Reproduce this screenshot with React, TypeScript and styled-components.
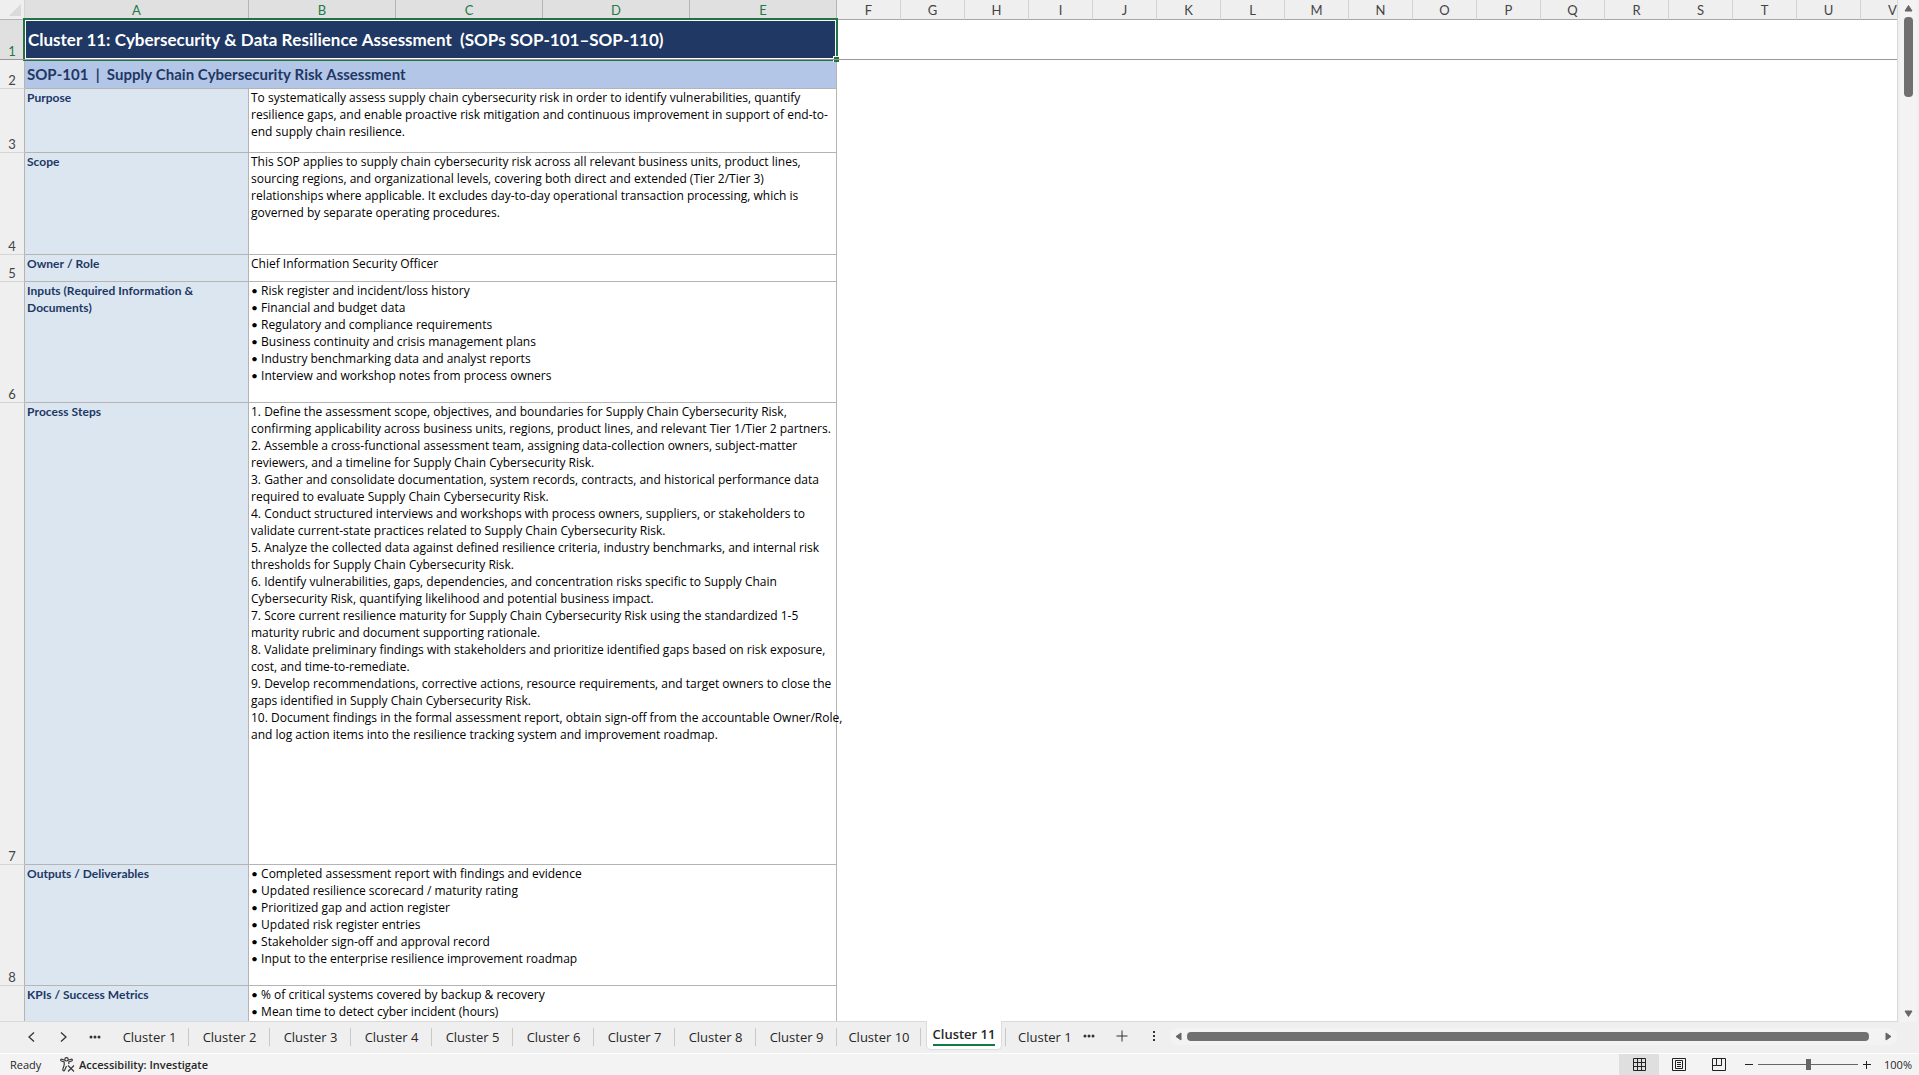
import React, { Fragment } from 'react';
import styled, { createGlobalStyle, css } from 'styled-components';

const sheetFont = "Lato, 'Liberation Sans', sans-serif";
const uiFont = "'Open Sans', 'Noto Sans', sans-serif";

const GlobalStyle = createGlobalStyle`
  * { box-sizing: border-box; }
  body { margin: 0; background: #efefef; font-family: ${uiFont}; color: #262626; }
  button { font: inherit; color: inherit; background: none; border: 0; padding: 0; margin: 0; cursor: default; }
`;

const Window = styled.div`
  display: flex;
  flex-direction: column;
  height: 100vh;
  overflow: hidden;
`;

const Workspace = styled.main`
  flex: 1;
  min-height: 0;
  display: flex;
`;

const SheetPane = styled.div`
  flex: 1;
  min-width: 0;
  overflow: hidden;
  background: #fff;
  border-right: 1px solid #d9d9d9;
  border-bottom: 1px solid #d9d9d9;
`;

const Grid = styled.table`
  table-layout: fixed;
  width: 1925px;
  border-collapse: separate;
  border-spacing: 0;
  font-family: ${sheetFont};
`;

const Col = styled.col<{ $w: number }>`
  width: ${p => p.$w}px;
`;

const Corner = styled.td`
  height: 20px;
  padding: 4px 3px 3px 0;
  background: #efefef;
  border-right: 1px solid #d4d4d4;
  border-bottom: 1px solid #b4b4b4;
  svg { display: block; margin-left: auto; }
`;

const ColumnHead = styled.th<{ $active?: boolean }>`
  height: 20px;
  padding: 2px 0 1px;
  background: ${p => (p.$active ? '#e0e0e0' : '#efefef')};
  color: ${p => (p.$active ? '#1e7a47' : '#444')};
  border-right: 1px solid ${p => (p.$active ? '#b4b4b4' : '#d4d4d4')};
  border-bottom: 1px solid #a6a6a6;
  font-size: 13px;
  line-height: 16px;
  font-weight: 400;
  text-align: center;
`;

const RowHead = styled.th<{ $active?: boolean }>`
  padding: 0;
  background: ${p => (p.$active ? '#e0e0e0' : '#efefef')};
  color: ${p => (p.$active ? '#1e7a47' : '#444')};
  border-right: 1px solid #b4b4b4;
  border-bottom: 1px solid ${p => (p.$active ? '#999' : '#d4d4d4')};
  font-size: 13px;
  line-height: 16px;
  font-weight: 400;
  text-align: center;
  vertical-align: bottom;
`;

const Row = styled.tr<{ $h: number }>`
  height: ${p => p.$h}px;
`;

const cell = css`
  padding: 0 2px;
  border-right: 1px solid #b4b4b4;
  border-bottom: 1px solid #b4b4b4;
  vertical-align: top;
  text-align: left;
  line-height: 17px;
  white-space: pre;
`;

const TitleCell = styled.td`
  position: relative;
  padding: 0 3px;
  background: #203864;
  color: #fff;
  font-size: 17px;
  line-height: 24px;
  font-weight: 700;
  font-kerning: none;
  white-space: pre;
`;

const Selection = styled.div`
  position: absolute;
  inset: -2px -1px -1px -2px;
  border: 2px solid #217346;
  box-shadow: inset 0 0 0 1px #fff;
`;

const FillHandle = styled.div`
  position: absolute;
  right: -2px;
  bottom: -2px;
  width: 6px;
  height: 6px;
  background: #217346;
  border: solid #fff;
  border-width: 1px 0 0 1px;
`;

const FreezeLine = styled.div`
  position: absolute;
  left: -2px;
  right: -2px;
  bottom: 0;
  height: 1px;
  background: #999;
`;

const SectionCell = styled.td`
  ${cell}
  vertical-align: middle;
  background: #b4c6e7;
  color: #203864;
  font-size: 15px;
  font-weight: 700;
  font-kerning: none;
`;

const LabelCell = styled.th`
  ${cell}
  background: #dce6f1;
  color: #203864;
  font-size: 12px;
  font-weight: 700;
  font-kerning: none;
  font-variant-ligatures: none;
`;

const TextCell = styled.td`
  ${cell}
  color: #000;
  font-family: ${uiFont};
  font-size: 12px;
`;

const Bullet = styled.span`
  font-family: ${sheetFont};
  line-height: 1;
`;

const EmptyCell = styled.td<{ $frozen?: boolean }>`
  border-bottom: ${p => (p.$frozen ? '1px solid #999' : '0')};
`;

const VScroll = styled.div`
  width: 21px;
  display: flex;
  flex-direction: column;
  align-items: center;
  padding: 4px 0;
  background: #f3f3f3;
  border-left: 2px solid #efefef;
  border-right: 2px solid #efefef;
`;

const VTrack = styled.div`
  flex: 1;
  padding-top: 5px;
`;

const VThumb = styled.div`
  width: 9px;
  height: 80px;
  border-radius: 4px;
  background: #707070;
`;

const ArrowButton = styled.button`
  display: block;
  svg { display: block; }
`;

const TabBar = styled.nav`
  height: 31px;
  display: flex;
  align-items: flex-start;
  background: #efefef;
  font-size: 13px;
`;

const NavButtons = styled.div`
  display: flex;
  align-items: center;
  height: 30px;
  width: 110px;
  padding-left: 15px;
`;

const NavButton = styled.button<{ $w?: number }>`
  width: ${p => p.$w ?? 32}px;
  height: 28px;
  display: flex;
  align-items: center;
  justify-content: center;
  svg { display: block; }
`;

const Tab = styled.button<{ $w: number }>`
  width: ${p => p.$w}px;
  height: 30px;
  display: flex;
  align-items: center;
  justify-content: center;
  position: relative;
  white-space: nowrap;
  &::after {
    content: '';
    position: absolute;
    right: 0;
    top: 6px;
    height: 18px;
    width: 1px;
    background: #c8c8c8;
  }
`;

const ActiveTab = styled.button`
  width: 76px;
  height: 29px;
  margin: -1px 0 0 5px;
  padding-bottom: 1px;
  background: #fff;
  border: 1px solid #dcdcdc;
  border-top: 0;
  border-radius: 0 0 5px 5px;
  font-weight: 600;
  line-height: 20px;
  white-space: nowrap;
  span {
    display: inline-block;
    border-bottom: 2px solid #107c41;
  }
`;

const TabDivider = styled.span`
  width: 1px;
  height: 18px;
  margin: 6px 0 0 3px;
  background: #c8c8c8;
`;

const CutTab = styled.button`
  height: 30px;
  padding-left: 12px;
  white-space: nowrap;
`;

const HScroll = styled.div`
  flex: 1;
  min-width: 0;
  height: 17px;
  margin: 6px 22px 0 0;
  padding: 0 5px;
  display: flex;
  align-items: center;
  border-radius: 8px;
  background: #f3f3f3;
`;

const HThumb = styled.div`
  flex: 1;
  height: 9px;
  margin: 0 16px 0 5px;
  border-radius: 4px;
  background: #707070;
`;

const StatusBar = styled.footer`
  height: 22px;
  display: flex;
  align-items: stretch;
  background: #f3f3f3;
  border-top: 1px solid #fff;
  font-size: 11px;
`;

const Ready = styled.span`
  display: flex;
  align-items: center;
  width: 60px;
  padding-left: 10px;
`;

const Access = styled.button`
  display: flex;
  align-items: center;
  gap: 4px;
  font-weight: 600;
`;

const ViewGroup = styled.div`
  display: flex;
  margin-left: auto;
`;

const ViewButton = styled.button<{ $active?: boolean }>`
  width: 40px;
  display: flex;
  align-items: center;
  justify-content: center;
  background: ${p => (p.$active ? '#dfdfdf' : 'transparent')};
`;

const Zoom = styled.div`
  display: flex;
  align-items: center;
  width: 180px;
  padding-left: 3px;
`;

const ZoomButton = styled.button`
  flex: none;
  width: 14px;
  height: 20px;
  display: flex;
  align-items: center;
  justify-content: center;
`;

const Slider = styled.input`
  appearance: none;
  flex: none;
  width: 100px;
  height: 12px;
  margin: 0 2px;
  background: linear-gradient(#666, #666) center / 100% 1px no-repeat;
  &::-webkit-slider-thumb {
    appearance: none;
    width: 5px;
    height: 11px;
    background: #666;
  }
`;

const ZoomValue = styled.button`
  flex: 1;
  padding-left: 3px;
  white-space: nowrap;
`;

const rows: { n: number; h: number; label: string; text: string }[] = [
  {
    n: 3, h: 64, label: 'Purpose',
    text: `To systematically assess supply chain cybersecurity risk in order to identify vulnerabilities, quantify
resilience gaps, and enable proactive risk mitigation and continuous improvement in support of end-to-
end supply chain resilience.`,
  },
  {
    n: 4, h: 102, label: 'Scope',
    text: `This SOP applies to supply chain cybersecurity risk across all relevant business units, product lines,
sourcing regions, and organizational levels, covering both direct and extended (Tier 2/Tier 3)
relationships where applicable. It excludes day-to-day operational transaction processing, which is
governed by separate operating procedures.`,
  },
  { n: 5, h: 27, label: 'Owner / Role', text: 'Chief Information Security Officer' },
  {
    n: 6, h: 121, label: 'Inputs (Required Information &\nDocuments)',
    text: `• Risk register and incident/loss history
• Financial and budget data
• Regulatory and compliance requirements
• Business continuity and crisis management plans
• Industry benchmarking data and analyst reports
• Interview and workshop notes from process owners`,
  },
  {
    n: 7, h: 462, label: 'Process Steps',
    text: `1. Define the assessment scope, objectives, and boundaries for Supply Chain Cybersecurity Risk,
confirming applicability across business units, regions, product lines, and relevant Tier 1/Tier 2 partners.
2. Assemble a cross-functional assessment team, assigning data-collection owners, subject-matter
reviewers, and a timeline for Supply Chain Cybersecurity Risk.
3. Gather and consolidate documentation, system records, contracts, and historical performance data
required to evaluate Supply Chain Cybersecurity Risk.
4. Conduct structured interviews and workshops with process owners, suppliers, or stakeholders to
validate current-state practices related to Supply Chain Cybersecurity Risk.
5. Analyze the collected data against defined resilience criteria, industry benchmarks, and internal risk
thresholds for Supply Chain Cybersecurity Risk.
6. Identify vulnerabilities, gaps, dependencies, and concentration risks specific to Supply Chain
Cybersecurity Risk, quantifying likelihood and potential business impact.
7. Score current resilience maturity for Supply Chain Cybersecurity Risk using the standardized 1-5
maturity rubric and document supporting rationale.
8. Validate preliminary findings with stakeholders and prioritize identified gaps based on risk exposure,
cost, and time-to-remediate.
9. Develop recommendations, corrective actions, resource requirements, and target owners to close the
gaps identified in Supply Chain Cybersecurity Risk.
10. Document findings in the formal assessment report, obtain sign-off from the accountable Owner/Role,
and log action items into the resilience tracking system and improvement roadmap.`,
  },
  {
    n: 8, h: 121, label: 'Outputs / Deliverables',
    text: `• Completed assessment report with findings and evidence
• Updated resilience scorecard / maturity rating
• Prioritized gap and action register
• Updated risk register entries
• Stakeholder sign-off and approval record
• Input to the enterprise resilience improvement roadmap`,
  },
  {
    n: 9, h: 121, label: 'KPIs / Success Metrics',
    text: `• % of critical systems covered by backup & recovery
• Mean time to detect cyber incident (hours)`,
  },
];

const LAST_NUMBERED_ROW = 8;

const letters = 'ABCDEFGHIJKLMNOPQRSTUV'.split('');
const widthOf = (i: number) => (i === 0 ? 224 : i < 5 ? 147 : 64);
const EXTRA = letters.length - 5;

const CellText = ({ text }: { text: string }) => (
  <>
    {text.split('\n').map((line, i) => (
      <Fragment key={i}>
        {i > 0 && '\n'}
        {line.startsWith('•') ? <><Bullet>•</Bullet>{line.slice(1)}</> : line}
      </Fragment>
    ))}
  </>
);

const Dots = () => (
  <svg width="12" height="4" viewBox="0 0 12 4" fill="#333">
    <circle cx="2" cy="2" r="1.5" /><circle cx="6" cy="2" r="1.5" /><circle cx="10" cy="2" r="1.5" />
  </svg>
);

const Arrow = ({ d, w, h }: { d: string; w: number; h: number }) => (
  <svg width={w} height={h} viewBox={`0 0 ${w} ${h}`}>
    <path d={d} fill="#666" stroke="#666" strokeLinejoin="round" />
  </svg>
);

export default function App() {
  return (
    <>
      <GlobalStyle />
      <Window>
        <Workspace>
          <SheetPane>
            <Grid>
              <colgroup>
                <Col $w={25} />
                {letters.map((l, i) => <Col key={l} $w={widthOf(i)} />)}
              </colgroup>
              <thead>
                <tr>
                  <Corner>
                    <svg width="12" height="12" viewBox="0 0 12 12"><path d="M12 0v12H0z" fill="#dadada" /></svg>
                  </Corner>
                  {letters.map((l, i) => <ColumnHead key={l} scope="col" $active={i < 5}>{l}</ColumnHead>)}
                </tr>
              </thead>
              <tbody>
                <Row $h={40}>
                  <RowHead scope="row" $active>1</RowHead>
                  <TitleCell colSpan={5}>
                    Cluster 11: Cybersecurity &amp; Data Resilience Assessment{'  '}(SOPs SOP-101–SOP-110)
                    <Selection />
                    <FillHandle />
                    <FreezeLine />
                  </TitleCell>
                  <EmptyCell colSpan={EXTRA} $frozen />
                </Row>
                <Row $h={29}>
                  <RowHead scope="row">2</RowHead>
                  <SectionCell colSpan={5}>SOP-101{'  '}|{'  '}Supply Chain Cybersecurity Risk Assessment</SectionCell>
                  <EmptyCell colSpan={EXTRA} />
                </Row>
                {rows.map(r => (
                  <Row key={r.n} $h={r.h}>
                    <RowHead scope="row" aria-label={`${r.n}`}>{r.n <= LAST_NUMBERED_ROW && r.n}</RowHead>
                    <LabelCell>{r.label}</LabelCell>
                    <TextCell colSpan={4}><CellText text={r.text} /></TextCell>
                    <EmptyCell colSpan={EXTRA} />
                  </Row>
                ))}
              </tbody>
            </Grid>
          </SheetPane>
          <VScroll>
            <ArrowButton aria-label="Scroll up"><Arrow w={9} h={8} d="M4.5 1.5 8 7H1z" /></ArrowButton>
            <VTrack><VThumb /></VTrack>
            <ArrowButton aria-label="Scroll down"><Arrow w={9} h={8} d="M4.5 6.5 8 1H1z" /></ArrowButton>
          </VScroll>
        </Workspace>

        <TabBar>
          <NavButtons>
            <NavButton aria-label="Previous sheet">
              <svg width="7" height="10" viewBox="0 0 7 10" fill="none" stroke="#333" strokeWidth="1.3"><path d="M6 .5 1 5l5 4.500" /></svg>
            </NavButton>
            <NavButton aria-label="Next sheet">
              <svg width="7" height="10" viewBox="0 0 7 10" fill="none" stroke="#333" strokeWidth="1.3"><path d="m1 .5 5 4.500-5 4.500" /></svg>
            </NavButton>
            <NavButton $w={31} aria-label="More sheets"><Dots /></NavButton>
          </NavButtons>
          {Array.from({ length: 10 }, (_, i) => (
            <Tab key={i} $w={i === 0 ? 79 : i === 9 ? 84 : 81}>Cluster {i + 1}</Tab>
          ))}
          <ActiveTab><span>Cluster 11</span></ActiveTab>
          <TabDivider />
          <CutTab>Cluster 1</CutTab>
          <NavButton $w={34} aria-label="More sheets"><Dots /></NavButton>
          <NavButton aria-label="New sheet">
            <svg width="12" height="12" viewBox="0 0 12 12" stroke="#333"><path d="M6 .5v11M.5 6h11" /></svg>
          </NavButton>
          <NavButton aria-label="Resize tab bar">
            <svg width="2" height="10" viewBox="0 0 2 10" fill="#333"><path d="M0 0h2v2H0zM0 4h2v2H0zM0 8h2v2H0z" /></svg>
          </NavButton>
          <HScroll>
            <ArrowButton aria-label="Scroll left"><Arrow w={7} h={9} d="M1 4.500 6 1v7z" /></ArrowButton>
            <HThumb />
            <ArrowButton aria-label="Scroll right"><Arrow w={7} h={9} d="M6 4.500 1 1v7z" /></ArrowButton>
          </HScroll>
        </TabBar>

        <StatusBar>
          <Ready>Ready</Ready>
          <Access>
            <svg width="15" height="15" viewBox="0 0 15 15" fill="none" stroke="#333" strokeWidth="1.1">
              <circle cx="6.500" cy="2.300" r="1.700" />
              <path d="M4.800 3.200 2 2.200C.6 1.800.2 3.500 1.400 4L4.200 5v3L2.800 12.500c-.3 1.400 1.300 1.900 1.800.7L6.500 9M8.200 3.200 11 2.200c1.400-.4 1.800 1.300.6 1.800L8.800 5v2" />
              <path d="m8 8.500 6 6M14 8.500l-6 6" />
            </svg>
            Accessibility: Investigate
          </Access>
          <ViewGroup>
            <ViewButton $active aria-label="Normal view">
              <svg width="13" height="13" viewBox="0 0 13 13" fill="none" stroke="#222"><path d="M.5.5h12v12H.5zM4.500.5v12M8.500.5v12M.5 4.500h12M.5 8.500h12" /></svg>
            </ViewButton>
            <ViewButton aria-label="Page layout">
              <svg width="14" height="13" viewBox="0 0 14 13" fill="none" stroke="#222"><path d="M.5.5h13v12H.5zM3.500 2.500h7v8h-7zM5 4.500h4M5 6.500h4M5 8.500h4" /></svg>
            </ViewButton>
            <ViewButton aria-label="Page break preview">
              <svg width="14" height="13" viewBox="0 0 14 13" fill="none" stroke="#222"><path d="M.5.5h13v12H.5zM4.500.5v7h5v-7M.5 7.500h4M9.500 .5v7" /></svg>
            </ViewButton>
          </ViewGroup>
          <Zoom>
            <ZoomButton aria-label="Zoom out"><svg width="8" height="8" viewBox="0 0 8 8" stroke="#222"><path d="M0 3.500h8" /></svg></ZoomButton>
            <Slider type="range" min={0} max={100} defaultValue={50} aria-label="Zoom" />
            <ZoomButton aria-label="Zoom in"><svg width="8" height="8" viewBox="0 0 8 8" stroke="#222"><path d="M0 3.500h8M3.500 0v8" /></svg></ZoomButton>
            <ZoomValue>100%</ZoomValue>
          </Zoom>
        </StatusBar>
      </Window>
    </>
  );
}
